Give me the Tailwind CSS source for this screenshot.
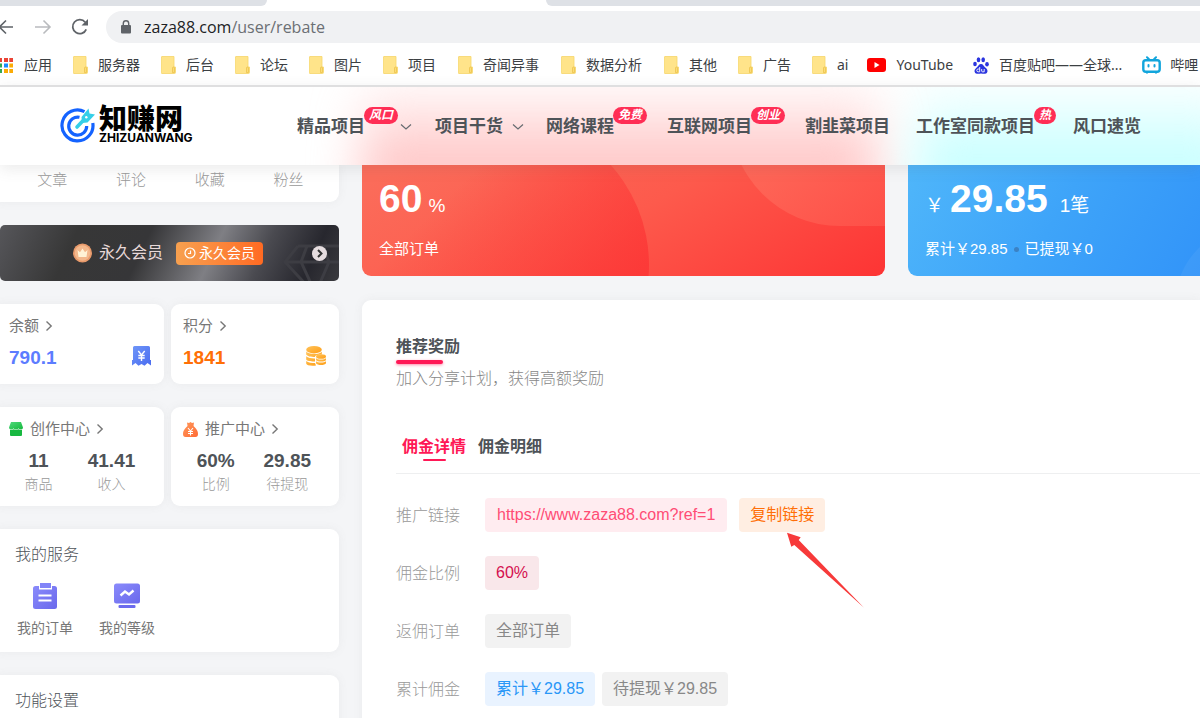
<!DOCTYPE html>
<html lang="zh-CN">
<head>
<meta charset="utf-8">
<title>知赚网 - 推荐奖励</title>
<script src="https://cdn.jsdelivr.net/npm/@tailwindcss/browser@4"></script>
</head>
<body class="relative flex h-screen flex-col overflow-hidden bg-[#f4f5f7] font-['Liberation_Sans','Noto_Sans_CJK_SC',sans-serif] text-[#4e5358]">

<svg class="absolute size-0" aria-hidden="true">
  <defs>
    <linearGradient id="g-blue" x1="0" y1="0" x2="1" y2="1"><stop offset="0" stop-color="#6f96f8"/><stop offset="1" stop-color="#4a6cf0"/></linearGradient>
    <linearGradient id="g-gold" x1="0" y1="0" x2="1" y2="1"><stop offset="0" stop-color="#ffc35a"/><stop offset="1" stop-color="#ff9d14"/></linearGradient>
    <linearGradient id="g-green" x1="0" y1="0" x2="1" y2="1"><stop offset="0" stop-color="#4fd97c"/><stop offset="1" stop-color="#14b83c"/></linearGradient>
    <linearGradient id="g-orange" x1="0" y1="0" x2="1" y2="1"><stop offset="0" stop-color="#ff9a5c"/><stop offset="1" stop-color="#ff6a35"/></linearGradient>
    <linearGradient id="g-violet" x1="0" y1="0" x2="1" y2="1"><stop offset="0" stop-color="#8a8bfb"/><stop offset="1" stop-color="#6a68ec"/></linearGradient>
    <symbol id="folder" viewBox="0 0 15 18"><path d="M1 .5h12v10.500h1.500v5.500q0 1-1 1H1q-.6 0-.6-.6V1.100Q.4.5 1 .5z" fill="#ffe48a" stroke="#f6d66a" stroke-width=".8"/><path d="M11.500 16.500v-4.500q0-1 1-1t1 1v4.500z" fill="#fbdc78" stroke="#e9bf45" stroke-width=".7"/></symbol>
    <symbol id="chev" viewBox="0 0 8 12"><path d="M1.500 1.500 6.200 6 1.500 10.500" fill="none" stroke="#777" stroke-width="1.400"/></symbol>
    <symbol id="down" viewBox="0 0 12 8"><path d="M1 1.500 6 6l5-4.500" fill="none" stroke="#666b70" stroke-width="1.200"/></symbol>
  </defs>
</svg>

<!-- browser chrome -->
<div class="flex h-[6px] shrink-0 bg-white">
  <div class="w-[267px] rounded-br-lg bg-[#dee1e6]"></div>
  <div class="w-[279px]"></div>
  <div class="flex-1 rounded-bl-lg bg-[#dee1e6]"></div>
</div>
<div class="flex h-[41px] shrink-0 items-center bg-white">
  <button aria-label="后退" class="w-[14px]"><svg width="14" height="16" viewBox="0 0 14 16" fill="none" stroke="#5f6368" stroke-width="1.600"><path d="M13 8H0M6 1.500-.5 8 6 14.500"/></svg></button>
  <button aria-label="前进" class="ml-[20px]"><svg width="18" height="16" viewBox="0 0 18 16" fill="none" stroke="#b9bbbe" stroke-width="1.600"><path d="M1 8h15M9.500 1.500 16 8l-6.500 6.500"/></svg></button>
  <button aria-label="刷新" class="ml-[19px]"><svg width="18" height="18" viewBox="0 0 18 18"><path d="M15.200 11.300A7 7 0 1 1 14.200 4.300" fill="none" stroke="#5f6368" stroke-width="1.800"/><path d="M17 1v6.500h-6.500z" fill="#5f6368"/></svg></button>
  <div class="ml-[17px] flex h-8 flex-1 items-center rounded-l-full bg-[#f0f1f3] pl-[15px]">
    <svg width="10" height="14" viewBox="0 0 10 14"><path d="M2.300 5.500V3.500a2.700 2.700 0 0 1 5.400 0v2" fill="none" stroke="#5f6368" stroke-width="1.400"/><rect y="5" width="10" height="8.500" rx="1" fill="#5f6368"/></svg>
    <p class="ml-[13px] font-['Open_Sans'] text-[16px] text-[#6b6f74]"><span class="text-[#202124]">zaza88.com</span>/user/rebate</p>
  </div>
</div>
<nav class="flex h-[38px] shrink-0 items-center overflow-hidden bg-white pb-[2px] font-['Noto_Sans','Noto_Sans_CJK_SC',sans-serif] text-[14px] leading-5 whitespace-nowrap text-[#3c4043]">
  <a href="#" class="mr-[21px] flex shrink-0 items-center gap-[11px]"><svg width="13" height="15" viewBox="0 0 13 15"><g fill="#ea4335"><path d="M-2 0h4v4h-4zM4 0h4v4H4zM9.300 0h4v4h-4z"/></g><path d="M-2 5.500h4v4h-4z" fill="#34a853"/><path d="M4 5.500h4v4H4z" fill="#1a8cff"/><path d="M9.300 5.500h4v4h-4zM4 11h4v4H4zM9.300 11h4v4h-4z" fill="#fbab05"/><path d="M-2 11h4v4h-4z" fill="#34a853"/></svg>应用</a>
  <a href="#" class="mr-[21px] flex shrink-0 items-center gap-[10px]"><svg width="15" height="18"><use href="#folder"/></svg>服务器</a>
  <a href="#" class="mr-[21px] flex shrink-0 items-center gap-[10px]"><svg width="15" height="18"><use href="#folder"/></svg>后台</a>
  <a href="#" class="mr-[21px] flex shrink-0 items-center gap-[10px]"><svg width="15" height="18"><use href="#folder"/></svg>论坛</a>
  <a href="#" class="mr-[21px] flex shrink-0 items-center gap-[10px]"><svg width="15" height="18"><use href="#folder"/></svg>图片</a>
  <a href="#" class="mr-[22px] flex shrink-0 items-center gap-[10px]"><svg width="15" height="18"><use href="#folder"/></svg>项目</a>
  <a href="#" class="mr-[22px] flex shrink-0 items-center gap-[10px]"><svg width="15" height="18"><use href="#folder"/></svg>奇闻异事</a>
  <a href="#" class="mr-[22px] flex shrink-0 items-center gap-[10px]"><svg width="15" height="18"><use href="#folder"/></svg>数据分析</a>
  <a href="#" class="mr-[21px] flex shrink-0 items-center gap-[10px]"><svg width="15" height="18"><use href="#folder"/></svg>其他</a>
  <a href="#" class="mr-[21px] flex shrink-0 items-center gap-[10px]"><svg width="15" height="18"><use href="#folder"/></svg>广告</a>
  <a href="#" class="mr-[19px] flex shrink-0 items-center gap-[10px]"><svg width="15" height="18"><use href="#folder"/></svg>ai</a>
  <a href="#" class="mr-[20px] flex shrink-0 items-center gap-[10px]"><svg width="19" height="14" viewBox="0 0 19 14"><rect width="19" height="14" rx="3" fill="#f00"/><path d="M7.500 4v6l5-3z" fill="#fff"/></svg>YouTube</a>
  <a href="#" class="mr-[20px] flex shrink-0 items-center gap-[10px]"><svg width="16" height="17" viewBox="0 0 16 17" fill="#2b35df"><ellipse cx="2" cy="7" rx="1.800" ry="2.300"/><ellipse cx="5.500" cy="2.800" rx="1.800" ry="2.500"/><ellipse cx="10.200" cy="2.800" rx="1.800" ry="2.500"/><ellipse cx="14" cy="7.200" rx="1.800" ry="2.300"/><path d="M8 7c2.200 0 2.600 2 4 3.300s3 2.400 2.300 4.600c-.7 2.300-3.300 2-6.300 1.700-3 .3-5.600.6-6.300-1.700C1 12.700 2.700 11.600 4 10.300S5.800 7 8 7z"/><path d="M6.700 10v4.800H5.200a1.300 1.300 0 0 1 0-2.800h1.500M8.700 12v2q0 .8.800.8h1.700V12" fill="none" stroke="#fff" stroke-width=".9"/></svg>百度贴吧——全球...</a>
  <a href="#" class="flex shrink-0 items-center gap-[9px]"><svg width="19" height="18" viewBox="0 0 19 18" fill="none" stroke="#12a5dc" stroke-width="2.400" stroke-linecap="round"><rect x="1.300" y="4.300" width="16.400" height="11.500" rx="2.500"/><path d="M5 1.300 6.800 3M14 1.300 12.200 3M6.500 9v1.500M12.500 9v1.500M5 16.500v.2M14 16.500v.2" stroke-width="2"/></svg>哔哩</a>
</nav>

<!-- site header -->
<header class="relative z-10 flex h-20 shrink-0 items-center border-t-2 border-[#dfdfe0] bg-white shadow-[0_4px_14px_rgba(90,90,90,0.12)]">
  <div class="absolute inset-0 overflow-hidden">
    <div class="absolute -bottom-10 left-[362px] h-[120px] w-[515px] bg-linear-to-b from-[#ffc6c6]/10 to-[#ffc6c6] to-65% blur-xl"></div>
    <div class="absolute -right-10 -bottom-10 left-[916px] h-[120px] bg-linear-to-b from-[#c6ffff]/10 to-[#c6ffff] to-65% blur-xl"></div>
  </div>
  <a href="#" aria-label="知赚网" class="relative ml-[60px] flex w-[237px] items-center gap-[3px]">
    <svg width="36" height="36" viewBox="0 0 36 36" fill="none"><path d="M24.500 3.600A15.500 15.500 0 1 0 32.800 15" stroke="#1463ff" stroke-width="3.200"/><path d="M19.500 9.300A9 9 0 1 0 26.700 18" stroke="#1463ff" stroke-width="3.200"/><path d="M17 19 26 9.500" stroke="#35cfe8" stroke-width="3.600" stroke-linecap="round"/><path d="M21.500 9 28.500.5 29.500 5.500l5.500 1L27.500 14.500l-5.500.5z" fill="#35cfe8"/><circle cx="26.300" cy="9.300" r="1.200" fill="#fff"/></svg>
    <span class="flex flex-col text-black">
      <span class="text-[28px] leading-[24px] font-black">知赚网</span>
      <span class="font-['Inter'] text-[12px] leading-[12px] font-bold">ZHIZUANWANG</span>
    </span>
  </a>
  <nav class="relative pt-px text-[17px] leading-6 font-bold whitespace-nowrap">
    <ul class="flex">
      <li class="relative flex items-center pr-[23px]"><a href="#">精品项目</a><svg class="ml-[35px]" width="12" height="8"><use href="#down"/></svg><span class="absolute -top-[8px] left-[67px] flex h-[17px] items-center rounded-full bg-[#ff2e55] px-[5px] text-[12px] italic text-white">风口</span></li>
      <li class="flex items-center pr-[22px]"><a href="#">项目干货</a><svg class="ml-[9px]" width="12" height="8"><use href="#down"/></svg></li>
      <li class="relative pr-[53px]"><a href="#">网络课程</a><span class="absolute -top-[8px] left-[67px] flex h-[17px] items-center rounded-full bg-[#ff2e55] px-[5px] text-[12px] italic text-white">免费</span></li>
      <li class="relative pr-[53px]"><a href="#">互联网项目</a><span class="absolute -top-[8px] left-[84px] flex h-[17px] items-center rounded-full bg-[#ff2e55] px-[5px] text-[12px] italic text-white">创业</span></li>
      <li class="pr-[26px]"><a href="#">割韭菜项目</a></li>
      <li class="relative pr-[38px]"><a href="#">工作室同款项目</a><span class="absolute -top-[8px] left-[118px] flex h-[17px] items-center rounded-full bg-[#ff2e55] px-[5px] text-[12px] italic text-white">热</span></li>
      <li><a href="#">风口速览</a></li>
    </ul>
  </nav>
</header>

<div class="flex min-h-0 flex-1 items-start gap-[23px] overflow-hidden">
  <!-- sidebar -->
  <aside class="flex w-[339px] shrink-0 flex-col gap-[23px]">
    <section class="-ml-2 flex h-[37px] rounded-b-[9px] bg-white pt-[3px] pr-[11px] pl-[21px] text-center text-[15px] leading-6 font-light text-[#999] shadow-[0_0_10px_rgba(116,116,116,0.08)]">
      <span class="flex-1">文章</span><span class="flex-1">评论</span><span class="flex-1">收藏</span><span class="flex-1">粉丝</span>
    </section>

    <a href="#" class="relative flex h-[56px] items-center overflow-hidden rounded-[5px] bg-[linear-gradient(115deg,#56565a_0%,#373737_22%,#363638_42%,#7f7f84_62%,#4a4a50_76%,#27272e_90%,#3a3a3e_100%)] pl-[73px] text-[16px] text-[#e8d9d9]">
      <svg class="absolute right-0 bottom-0" width="56" height="38" viewBox="0 0 56 38" fill="none" stroke="#3d3d43" stroke-width="3"><path d="M15 3h41M15 3 2 19l26 28M2 19h54M24 3 18 19l13 28M40 3l6 16-12 28"/></svg>
      <svg width="19" height="20" viewBox="0 0 19 20"><circle cx="9.500" cy="10" r="9.500" fill="#e89a6b"/><circle cx="9.500" cy="10" r="7.800" fill="#f3b88c"/><path d="m4.500 7 2.500 2.200L9.500 5.500 12 9.200 14.500 7l-1 7h-8z" fill="#fff3d6"/></svg>
      <span class="ml-[7px]">永久会员</span>
      <span class="ml-[13px] flex h-[23px] items-center gap-[3px] rounded-[4px] bg-linear-to-r from-[#f7a04f] to-[#ff6a22] px-2 text-[14px] text-white"><svg width="12" height="12" viewBox="0 0 12 12" fill="none" stroke="#fff" stroke-width="1.200"><circle cx="6" cy="6" r="5"/><path d="M6.500 3.500v3H4"/></svg>永久会员</span>
      <svg class="absolute right-[12px]" width="15" height="15" viewBox="0 0 15 15"><circle cx="7.500" cy="7.500" r="7.500" fill="#e6dde0"/><path d="m6 4 3.500 3.500L6 11" fill="none" stroke="#333" stroke-width="2"/></svg>
    </a>

    <div class="-ml-2 grid grid-cols-[172px_1fr] gap-[7px] text-[15px] leading-6">
      <a href="#" class="flex h-[80px] flex-col gap-2 rounded-[9px] bg-white pt-[10px] pr-[13px] pl-[17px] shadow-[0_0_10px_rgba(116,116,116,0.08)]">
        <span class="flex items-center gap-[6px] text-[#777]">余额<svg width="8" height="12"><use href="#chev"/></svg></span>
        <span class="flex items-start justify-between text-[19px] font-bold text-[#5c7cff]">790.1<svg width="19" height="20" viewBox="0 0 19 20"><path d="M2.500 0h14Q18 0 18 1.500V14h1v5.500L15.500 17l-3 2.700L9.500 18l-3 1.700-3-2.700L0 19.500V14h1V1.500Q1 0 2.500 0z" fill="url(#g-blue)"/><path d="m6.300 5 3.200 4 3.200-4M9.500 9v6M6.300 9.500h6.400M6.300 12h6.400" fill="none" stroke="#fff" stroke-width="1.400"/></svg></span>
      </a>
      <a href="#" class="flex h-[80px] flex-col gap-2 rounded-[9px] bg-white pt-[10px] pr-[13px] pl-3 shadow-[0_0_10px_rgba(116,116,116,0.08)]">
        <span class="flex items-center gap-[6px] text-[#777]">积分<svg width="8" height="12"><use href="#chev"/></svg></span>
        <span class="flex items-start justify-between text-[19px] font-bold text-[#ff6f06]">1841<svg width="20" height="20" viewBox="0 0 20 20" fill="url(#g-gold)"><ellipse cx="8" cy="3.700" rx="7.800" ry="3.700"/><path d="M.2 5.500C2 8.500 13 9 15.800 5.700V8.500C11 8.500 9 9.500 9 11 5 11 1 10.200.2 8.500zM.2 10.200C2 12 6 12.500 9 12.400v3C5 15.500 1 15 .2 13.500zM.2 15C2 16.700 6 17 9 17l1 2.500C5 20 .5 19.500.2 17.500z"/><ellipse cx="15" cy="10.500" rx="5" ry="2.300"/><path d="M10 12c1.500 2 8.500 2 10 0v2c-1 2-9 2-10 0zM10 15.200c1.500 1.800 8.500 1.800 10 0v2c-1 2.400-9 2.400-10 0z"/></svg></span>
      </a>
    </div>

    <div class="-ml-2 grid grid-cols-[172px_1fr] gap-[7px] text-[15px] leading-6">
      <section class="h-[99px] rounded-[9px] bg-white pt-[10px] pr-[16px] pl-[10px] shadow-[0_0_10px_rgba(116,116,116,0.08)]">
        <a href="#" class="flex items-center pl-[7px] text-[#777]"><svg width="14" height="14" viewBox="0 0 14 14"><path d="M2 0h10l2 5.500q0 2-2 2t-2.500-1.200Q9 7.500 7 7.500T4.500 6.300Q4 7.500 2 7.500t-2-2z" fill="url(#g-green)"/><path d="M1 7.800q2.500.5 3.500-.5Q7 8.600 9.500 7.300q1 1 3.500.5V13q0 1-1 1H2q-1 0-1-1z" fill="#17b840"/></svg><span class="mr-[6px] ml-[7px]">创作中心</span><svg width="8" height="12"><use href="#chev"/></svg></a>
        <div class="mt-2 grid grid-cols-2 text-center"><p><b class="block text-[19px]">11</b><span class="block text-[14px] leading-[22px] font-light text-[#999]">商品</span></p><p><b class="block text-[19px]">41.41</b><span class="block text-[14px] leading-[22px] font-light text-[#999]">收入</span></p></div>
      </section>
      <section class="h-[99px] rounded-[9px] bg-white pt-[10px] pr-[16px] pl-[9px] shadow-[0_0_10px_rgba(116,116,116,0.08)]">
        <a href="#" class="flex items-center pl-[3px] text-[#777]"><svg width="15" height="15" viewBox="0 0 15 15"><path d="M4 .5 6 1l1.500-1L9 1l2-.5L10.500 4C14 7 15 9.500 15 12q0 3-2.500 3h-10Q0 15 0 12c0-2.500 1-5 4.500-8z" fill="url(#g-orange)"/><path d="m5 6 2.500 3L10 6M7.500 9v4.500M5 9.500h5M5 11.500h5" fill="none" stroke="#fff" stroke-width="1.100"/></svg><span class="mr-[6px] ml-[7px]">推广中心</span><svg width="8" height="12"><use href="#chev"/></svg></a>
        <div class="mt-2 grid grid-cols-2 text-center"><p><b class="block text-[19px]">60%</b><span class="block text-[14px] leading-[22px] font-light text-[#999]">比例</span></p><p><b class="block text-[19px]">29.85</b><span class="block text-[14px] leading-[22px] font-light text-[#999]">待提现</span></p></div>
      </section>
    </div>

    <section class="-ml-2 h-[123px] rounded-[9px] bg-white pt-[14px] pl-[23px] shadow-[0_0_10px_rgba(116,116,116,0.08)]">
      <h2 class="text-[16px] leading-6 font-light">我的服务</h2>
      <div class="mt-[15px] flex gap-[26px] pl-[2px] text-[14px] leading-5 text-[#777]">
        <a href="#" class="flex flex-col items-center gap-2"><svg width="28" height="28" viewBox="0 0 28 28"><path d="M4.500 4H8v3.500h13V4h2.500Q26 4 26 6.500v18q0 2.500-2.500 2.500h-19Q2 27 2 24.500v-18Q2 4 4.500 4z" fill="url(#g-violet)"/><rect x="9" y="1" width="11" height="5" fill="#8284f8"/><path d="M7.500 13.500h13M7.500 18.500h13" stroke="#fff" stroke-width="2"/></svg>我的订单</a>
        <a href="#" class="flex flex-col items-center gap-2"><svg width="28" height="28" viewBox="0 0 28 28"><rect x="1" y="1.500" width="26" height="20" rx="2.500" fill="url(#g-violet)"/><rect x="5.500" y="23" width="17" height="3" rx="1" fill="#6c6bee"/><path d="m7.500 13.500 4.500-4 4 3 4.500-4" fill="none" stroke="#fff" stroke-width="2.400"/></svg>我的等级</a>
      </div>
    </section>

    <section class="-ml-2 rounded-t-[9px] bg-white pt-[14px] pl-[23px] shadow-[0_0_10px_rgba(116,116,116,0.08)]">
      <h2 class="pb-8 text-[16px] leading-6 font-light">功能设置</h2>
    </section>
  </aside>

  <!-- rebate overview -->
  <main class="flex min-w-0 flex-1 flex-col gap-6">
    <div class="flex gap-[23px] text-white">
      <section class="relative h-[111px] w-[523px] shrink-0 overflow-hidden rounded-b-[9px] bg-[linear-gradient(150deg,#fb6c5a_5%,#fd5a4c_50%,#fd3434_100%)] pt-[10px] pl-[17px]">
        <div class="absolute -top-[50px] -left-[13px] size-[300px] rounded-full bg-[linear-gradient(135deg,transparent_30%,#fc3535_85%)]"></div>
        <div class="absolute -top-[158px] left-[368px] h-[219px] w-[200px] rounded-bl-[110px] bg-[linear-gradient(135deg,#ff7a68,#ff6f5f_50%,#ff5a50_90%)] opacity-60"></div>
        <p class="relative flex items-baseline gap-[6px]"><b class="text-[39px] leading-[48px]">60</b><span class="text-[19px]">%</span></p>
        <p class="relative mt-[14px] text-[15px] leading-6">全部订单</p>
      </section>
      <section class="relative h-[111px] flex-1 overflow-hidden rounded-bl-[9px] bg-[linear-gradient(120deg,#4fb6fa_0%,#3ea4f9_50%,#3294f9_100%)] pt-[10px] pl-[17px] whitespace-nowrap">
        <div class="absolute top-[60px] left-[267px] size-[160px] rounded-full bg-white/5"></div>
        <p class="relative flex items-baseline text-[19px]"><span>￥</span><b class="ml-[6px] text-[39px] leading-[48px]">29.85</b><span class="ml-[12px]">1笔</span></p>
        <p class="relative mt-[14px] flex items-center text-[15px] leading-6">累计￥29.85<span class="mx-[6px] size-[5px] rounded-full bg-[#3b82c4]"></span>已提现￥0</p>
      </section>
    </div>

    <section class="rounded-tl-[9px] bg-white pt-[35px] pb-8 pl-[34px] text-[16px] leading-6 shadow-[0_0_10px_rgba(116,116,116,0.08)]">
      <h1 class="font-bold">推荐奖励</h1>
      <div class="mt-px h-1 w-[47px] rounded-full bg-[#ff1856] shadow-[0_1px_3px_#ff185680]"></div>
      <p class="mt-[3px] font-light text-[#888]">加入分享计划，获得高额奖励</p>
      <div class="mt-[44px] flex gap-[12px] border-b border-[#eeeff0] pl-[6px] font-bold">
        <button class="flex flex-col items-center pb-[12px] text-[#ff1856]">佣金详情<span class="h-[2px] w-[23px] rounded-full bg-[#ff1856]"></span></button>
        <button class="self-start">佣金明细</button>
      </div>
      <dl class="mt-[24px] flex flex-col gap-6 whitespace-nowrap">
        <div class="flex items-center"><dt class="w-[89px] pt-[2px] font-light text-[#999]">推广链接</dt><dd class="flex gap-3"><a href="#" class="flex h-[34px] items-center rounded-[4px] bg-[#ffecf0] px-3 text-[#ff4d75]">https://www.zaza88.com?ref=1</a><button class="h-[34px] rounded-[4px] bg-[#ffeee2] px-[11px] text-[#ff6f06]">复制链接</button></dd></div>
        <div class="flex items-center"><dt class="w-[89px] pt-[2px] font-light text-[#999]">佣金比例</dt><dd class="flex h-[34px] items-center rounded-[4px] bg-[#f9e7ea] px-[11px] text-[#d4104f]">60%</dd></div>
        <div class="flex items-center"><dt class="w-[89px] pt-[2px] font-light text-[#999]">返佣订单</dt><dd class="flex h-[34px] items-center rounded-[4px] bg-[#f2f2f2] px-[11px] text-[#888]">全部订单</dd></div>
        <div class="flex items-center"><dt class="w-[89px] pt-[2px] font-light text-[#999]">累计佣金</dt><dd class="flex gap-[7px]"><span class="flex h-[34px] items-center rounded-[4px] bg-[#e9f3ff] px-[11px] text-[#2997f7]">累计￥29.85</span><span class="flex h-[34px] items-center rounded-[4px] bg-[#f2f2f2] px-[11px] text-[#888]">待提现￥29.85</span></dd></div>
      </dl>
    </section>
  </main>
</div>

<!-- hand-drawn pointer to the copy button -->
<svg class="pointer-events-none absolute top-[532px] left-[787px] z-20" width="78" height="77" viewBox="0 0 78 77"><path d="M0 .7 13.700 5.300l-2 2.700L77 75.700 7.300 13l-3 1.700z" fill="#f73a3a"/></svg>
</body>
</html>
